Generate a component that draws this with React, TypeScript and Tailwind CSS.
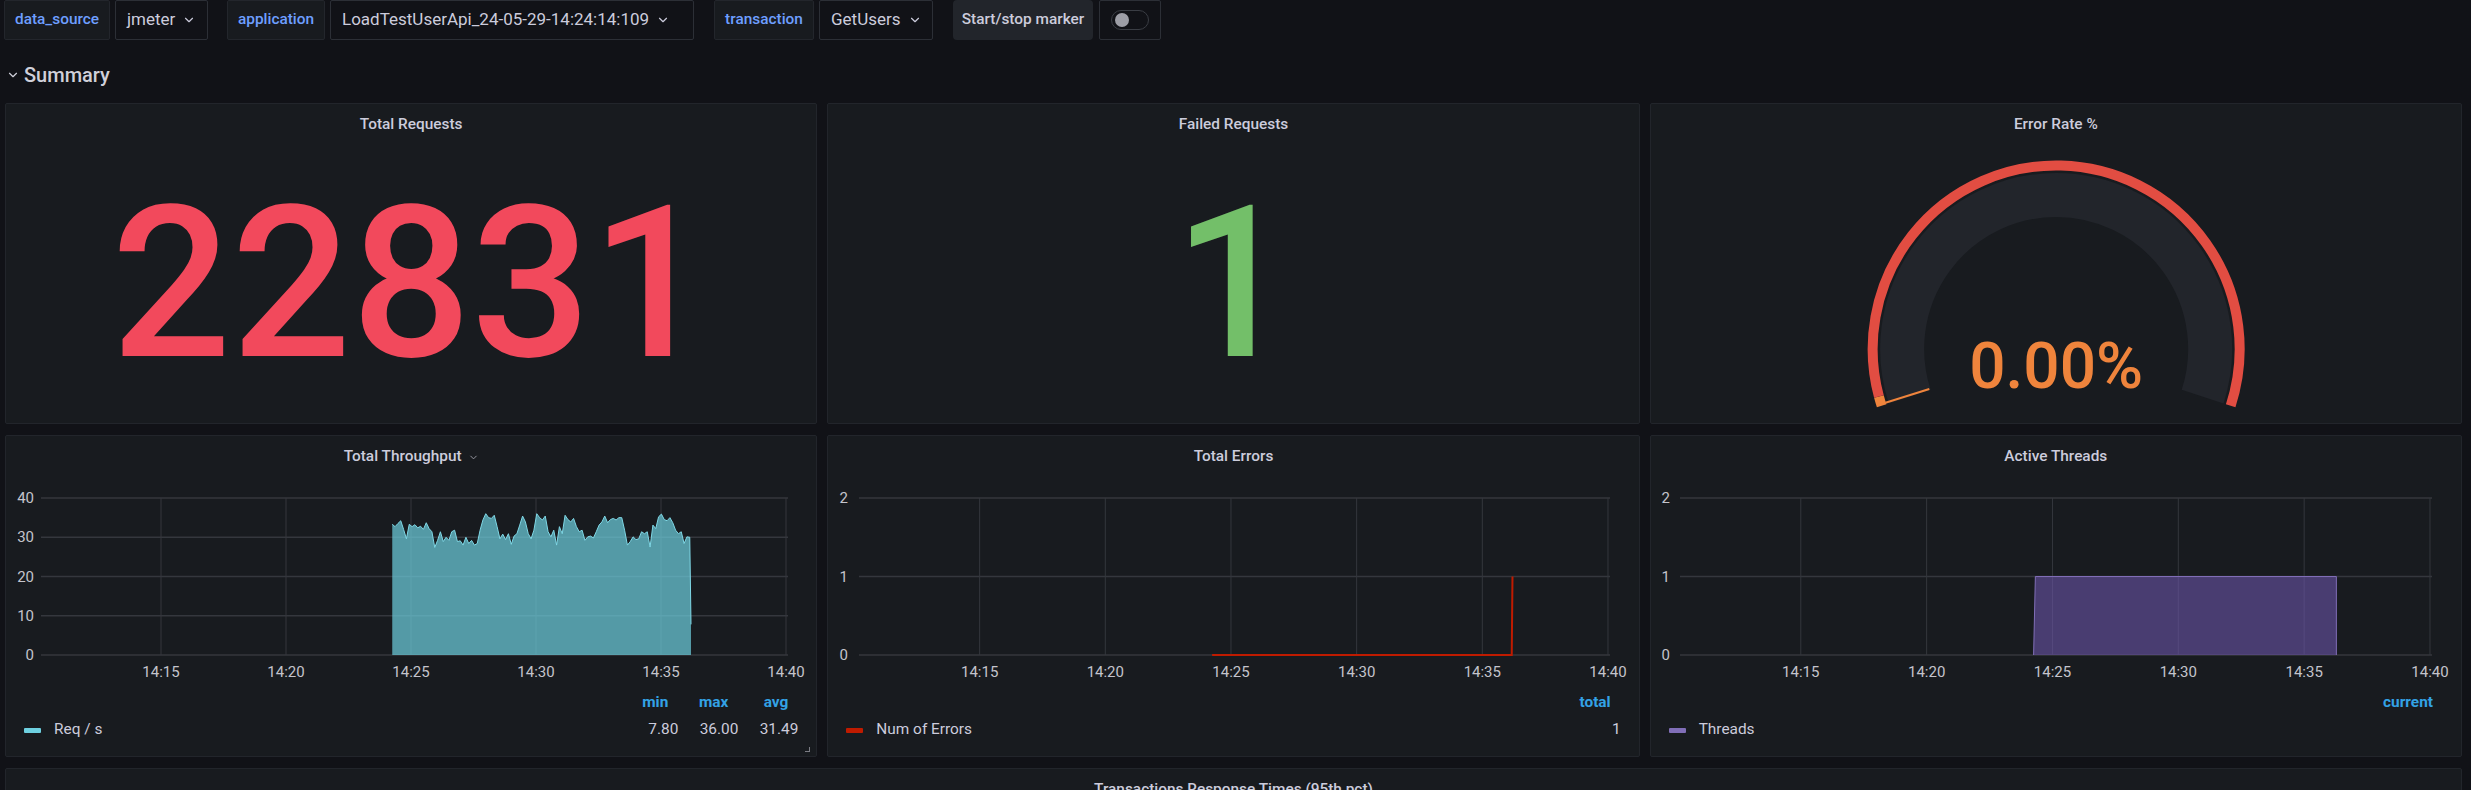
import { ChevronDown } from 'lucide-react';

// minutes from 14:10:12 to 14:40:05
const RANGE = 29.88;
const X_TICKS = [
  { label: '14:15', t: 4.8 },
  { label: '14:20', t: 9.8 },
  { label: '14:25', t: 14.8 },
  { label: '14:30', t: 19.8 },
  { label: '14:35', t: 24.8 },
  { label: '14:40', t: 29.8 },
];

const THROUGHPUT = [
  33.3, 32.7, 33.5, 34.2, 32.0, 29.6, 33.3, 32.7, 33.2, 32.4, 32.8, 32.0, 33.7, 32.2, 31.4, 27.4, 29.2, 31.4, 28.9, 30.0,
  29.2, 31.4, 31.8, 28.9, 29.1, 28.0, 30.0, 28.4, 29.2, 28.0, 28.4, 31.8, 34.4, 36.0, 35.0, 34.8, 35.6, 32.7, 29.6, 30.8,
  29.4, 30.9, 28.2, 30.3, 30.9, 33.1, 35.4, 33.9, 30.9, 29.6, 31.8, 36.0, 35.0, 34.4, 35.4, 31.4, 30.1, 31.8, 28.0, 32.7,
  30.9, 35.6, 34.5, 33.9, 34.8, 32.7, 31.4, 31.8, 29.2, 30.1, 30.3, 29.8, 31.4, 33.1, 33.9, 35.4, 33.7, 34.5, 34.8, 34.4,
  35.0, 35.0, 31.8, 28.0, 28.9, 30.1, 29.4, 29.6, 31.4, 30.9, 31.4, 27.5, 33.1, 32.2, 35.2, 35.9, 34.5, 34.2, 35.0, 33.7,
  31.8, 30.9, 31.4, 28.4, 30.1, 30.0,
];

const GRID = '#34373d';
const AXIS = '#c4c4cc';

type Tick = { label: string; y: number };

const FOUR: Tick[] = [
  { label: '40', y: 20 },
  { label: '30', y: 59.25 },
  { label: '20', y: 98.5 },
  { label: '10', y: 137.75 },
  { label: '0', y: 177 },
];
const TWO: Tick[] = [
  { label: '2', y: 20 },
  { label: '1', y: 98.5 },
  { label: '0', y: 177 },
];

function Chart({
  left,
  right,
  labelX,
  yTicks,
  children,
}: {
  left: number;
  right: number;
  labelX: number;
  yTicks: Tick[];
  children: (x: (t: number) => number, y: (v: number) => number) => React.ReactNode;
}) {
  const top = yTicks[0].y;
  const bottom = yTicks[yTicks.length - 1].y;
  const max = Number(yTicks[0].label);
  const x = (t: number) => left + (t / RANGE) * (right - left);
  const y = (v: number) => bottom - (v / max) * (bottom - top);
  return (
    <svg width={810} height={210} className="block" style={{ fontFamily: 'Roboto, sans-serif' }}>
      {yTicks.map((tk) => (
        <line key={tk.label} x1={left} x2={right} y1={tk.y} y2={tk.y} stroke={GRID} strokeWidth={1.5} />
      ))}
      {X_TICKS.map((tk) => (
        <line key={tk.label} x1={x(tk.t)} x2={x(tk.t)} y1={top} y2={bottom} stroke={GRID} strokeWidth={1} />
      ))}
      {children(x, y)}
      {yTicks.map((tk) => (
        <text key={tk.label} x={labelX} y={tk.y} fill={AXIS} fontSize={15} textAnchor="end" dominantBaseline="central">
          {tk.label}
        </text>
      ))}
      {X_TICKS.map((tk) => (
        <text key={tk.label} x={x(tk.t)} y={194} fill={AXIS} fontSize={15} textAnchor="middle" dominantBaseline="central">
          {tk.label}
        </text>
      ))}
    </svg>
  );
}

function Panel({ title, menu, className, children }: { title: string; menu?: boolean; className?: string; children?: React.ReactNode }) {
  return (
    <div className={`relative flex flex-col overflow-hidden rounded-[2px] border border-[#22252b] bg-[#181b1f] ${className ?? ''}`}>
      <div className="flex h-[42px] shrink-0 items-center justify-center gap-[6px] text-[15.4px] font-medium text-[#ccccdc]">
        {title}
        {menu && <ChevronDown size={11} strokeWidth={2} className="text-[#9fa0a8]" />}
      </div>
      {children}
    </div>
  );
}

function Legend({ color, name, heads, values }: { color: string; name: string; heads: string[]; values: string[] }) {
  return (
    <div className="flex flex-col gap-[5px] pt-[4px] pr-[18px] text-[15.4px] text-[#ccccdc]">
      <div className="flex h-[22px] items-center justify-end">
        {heads.map((h) => (
          <div key={h} className="w-[60px] pr-[10px] text-right font-bold text-[#33a2e5]">
            {h}
          </div>
        ))}
      </div>
      <div className="flex h-[22px] items-center">
        <div className="flex flex-1 items-center gap-[13px] pl-[18px]">
          <span className="h-[5px] w-[17px] rounded-[1px]" style={{ background: color }} />
          {name}
        </div>
        {values.map((v, i) => (
          <div key={i} className="w-[60px] text-right">
            {v}
          </div>
        ))}
      </div>
    </div>
  );
}

function Label({ text, w }: { text: string; w: string }) {
  return (
    <div className={`flex h-[40px] items-center justify-center rounded-[2px] border border-[#23262c] bg-[#181b1f] text-[15.4px] font-medium text-[#6e9fff] ${w}`}>
      {text}
    </div>
  );
}

function Select({ text, w }: { text: string; w: string }) {
  return (
    <div className={`flex h-[40px] items-center gap-[7px] rounded-[2px] border border-[#2c2f36] bg-[#111217] pl-[11px] text-[17px] text-[#ccccdc] ${w}`}>
      {text}
      <ChevronDown size={14} strokeWidth={2} className="text-[#ccccdc]" />
    </div>
  );
}

function arc(cx: number, cy: number, r: number, a0: number, a1: number) {
  const rad = (a: number) => (a * Math.PI) / 180;
  const p = (a: number) => `${cx + r * Math.cos(rad(a))} ${cy + r * Math.sin(rad(a))}`;
  return `M ${p(a0)} A ${r} ${r} 0 ${a1 - a0 > 180 ? 1 : 0} 1 ${p(a1)}`;
}

function Gauge() {
  const cx = 405;
  const cy = 203;
  const a = (162.5 * Math.PI) / 180;
  return (
    <svg viewBox="0 0 810 275" className="block h-[275px] w-full" style={{ fontFamily: 'Roboto, sans-serif' }}>
      <path d={arc(cx, cy, 154, 162, 378)} stroke="#22252b" strokeWidth={44} fill="none" />
      <path d={arc(cx, cy, 183.5, 162, 165)} stroke="#ef843c" strokeWidth={10} fill="none" />
      <path d={arc(cx, cy, 183.5, 165, 378)} stroke="#e24d42" strokeWidth={10} fill="none" />
      <line
        x1={cx + 133 * Math.cos(a)}
        y1={cy + 133 * Math.sin(a)}
        x2={cx + 179 * Math.cos(a)}
        y2={cy + 179 * Math.sin(a)}
        stroke="#ef843c"
        strokeWidth={2}
      />
      <text x={cx} y={242} fill="#ef843c" fontSize={64} fontWeight={500} textAnchor="middle">
        0.00%
      </text>
    </svg>
  );
}

export default function App() {
  const n = THROUGHPUT.length;
  const t0 = 14.05;
  const t1 = 25.95;

  return (
    <div className="h-[790px] overflow-hidden bg-[#111217] font-[Roboto,sans-serif]">
      {/* Variables bar */}
      <div className="flex h-[40px] items-start pl-[4px]">
        <Label text="data_source" w="w-[106px]" />
        <div className="ml-[5px]">
          <Select text="jmeter" w="w-[93px]" />
        </div>
        <div className="ml-[19px]">
          <Label text="application" w="w-[98px]" />
        </div>
        <div className="ml-[5px]">
          <Select text="LoadTestUserApi_24-05-29-14:24:14:109" w="w-[364px]" />
        </div>
        <div className="ml-[20px]">
          <Label text="transaction" w="w-[100px]" />
        </div>
        <div className="ml-[5px]">
          <Select text="GetUsers" w="w-[114px]" />
        </div>
        <div className="ml-[20px] flex h-[40px] w-[140px] items-center justify-center rounded-[4px] bg-[#22252b] text-[15.4px] font-medium text-[#ccccdc]">
          Start/stop marker
        </div>
        <div className="ml-[6px] flex h-[40px] w-[62px] items-center justify-center rounded-[2px] border border-[#2c2f36] bg-[#111217]">
          <div className="flex h-[20px] w-[38px] items-center rounded-full border border-[#3a3d44] bg-[#111217] pl-[3px]">
            <div className="h-[14px] w-[14px] rounded-full bg-[#9d9ea6]" />
          </div>
        </div>
      </div>

      {/* Row header */}
      <div className="flex h-[63px] items-center gap-[4px] pt-[6px] pl-[6px] text-[20px] font-medium text-[#d0d0da]">
        <ChevronDown size={14} strokeWidth={2} />
        Summary
      </div>

      <div className="grid grid-cols-3 gap-x-[10px] gap-y-[11px] pr-[9px] pl-[5px]">
        <Panel title="Total Requests" className="h-[321px]">
          <div className="flex flex-1 items-center justify-center text-[211px] leading-none font-medium text-[#f2495c]">22831</div>
        </Panel>
        <Panel title="Failed Requests" className="h-[321px]">
          <div className="flex flex-1 items-center justify-center text-[211px] leading-none font-medium text-[#73bf69]">1</div>
        </Panel>
        <Panel title="Error Rate %" className="h-[321px]">
          <Gauge />
        </Panel>

        <Panel title="Total Throughput" menu className="h-[322px]">
          <Chart left={35} right={782} labelX={28} yTicks={FOUR}>
            {(x, y) => {
              const pts = THROUGHPUT.map((v, i) => `${x(t0 + ((t1 - t0) * i) / (n - 1))},${y(v)}`);
              pts.push(`${x(26.0)},${y(7.8)}`);
              const line = pts.join(' L ');
              return (
                <>
                  <path d={`M ${x(t0)},${y(0)} L ${line} L ${x(26.0)},${y(0)} Z`} fill="#6ed0e0" fillOpacity={0.7} />
                  <path d={`M ${line}`} stroke="#7fd8e6" strokeWidth={1} fill="none" />
                </>
              );
            }}
          </Chart>
          <Legend color="#6ed0e0" name="Req / s" heads={['min', 'max', 'avg']} values={['7.80', '36.00', '31.49']} />
          <div className="absolute right-[6px] bottom-[4px] h-[5px] w-[5px] border-r border-b border-[#7b7c84]" />
        </Panel>

        <Panel title="Total Errors" className="h-[322px]">
          <Chart left={31} right={782} labelX={20} yTicks={TWO}>
            {(x, y) => (
              <polyline
                points={`${x(14.05)},${y(0)} ${x(25.97)},${y(0)} ${x(26.0)},${y(1)}`}
                stroke="#bf1b00"
                strokeWidth={2}
                fill="none"
              />
            )}
          </Chart>
          <Legend color="#bf1b00" name="Num of Errors" heads={['total']} values={['1']} />
        </Panel>

        <Panel title="Active Threads" className="h-[322px]">
          <Chart left={29} right={781} labelX={19} yTicks={TWO}>
            {(x, y) => (
              <>
                <polygon
                  points={`${x(14.05)},${y(0)} ${x(14.12)},${y(1)} ${x(26.08)},${y(1)} ${x(26.08)},${y(0)}`}
                  fill="#6a55a8"
                  fillOpacity={0.6}
                />
                <polyline
                  points={`${x(14.05)},${y(0)} ${x(14.12)},${y(1)} ${x(26.08)},${y(1)} ${x(26.08)},${y(0)}`}
                  stroke="#806eb7"
                  strokeWidth={1}
                  fill="none"
                />
              </>
            )}
          </Chart>
          <Legend color="#806eb7" name="Threads" heads={['current']} values={[]} />
        </Panel>

        <Panel title="Transactions Response Times (95th pct)" className="col-span-3 h-[321px]" />
      </div>
    </div>
  );
}
